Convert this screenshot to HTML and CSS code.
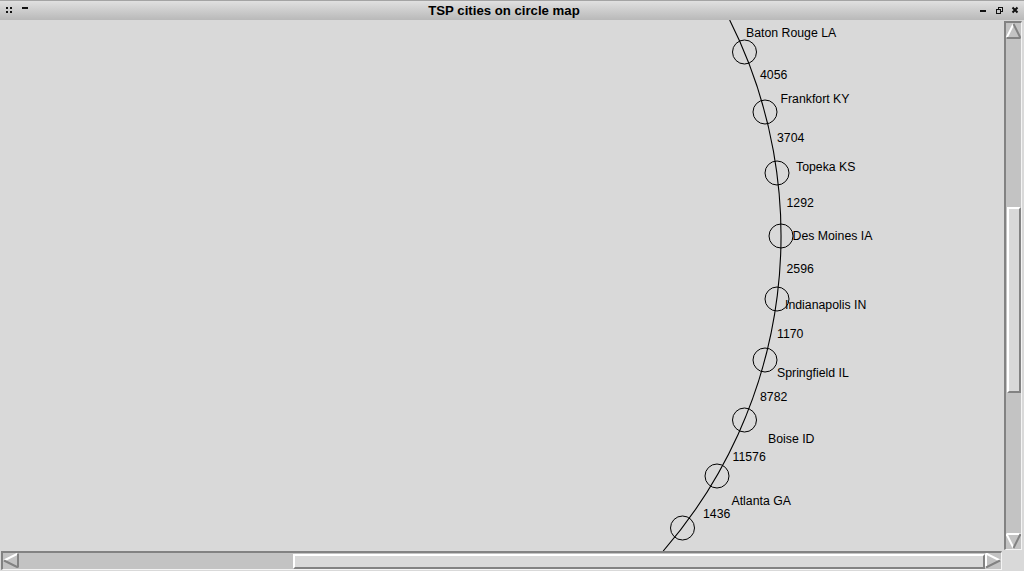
FILE: index.html
```html
<!DOCTYPE html>
<html>
<head>
<meta charset="utf-8">
<link rel="stylesheet" href="styles.css">
</head>
<body>
<div class="window">
  <div class="titlebar">
    <div class="tb-left">
      <svg class="ico" width="28" height="20" viewBox="0 0 28 20">
        <rect x="6" y="7" width="2" height="2" fill="#111"/>
        <rect x="10" y="7" width="2" height="2" fill="#111"/>
        <rect x="6" y="11" width="2" height="2" fill="#111"/>
        <rect x="10" y="11" width="2" height="2" fill="#111"/>
        <rect x="22" y="7" width="6" height="2" fill="#111"/>
      </svg>
    </div>
    <div class="title">TSP cities on circle map</div>
    <div class="tb-right">
      <svg class="ico" width="44" height="20" viewBox="0 0 44 20">
        <rect x="0" y="10" width="6" height="2" fill="#111"/>
        <rect x="18.5" y="7.5" width="4" height="4" fill="none" stroke="#111" stroke-width="1"/>
        <rect x="16.5" y="9.5" width="4" height="4" fill="#c8c8c8" stroke="#111" stroke-width="1"/>
        <path d="M32.5 7.5 L37.5 12.5 M37.5 7.5 L32.5 12.5" stroke="#111" stroke-width="2"/>
      </svg>
    </div>
  </div>
  <div class="main">
    <div class="canvas">
      <svg width="1004" height="531" viewBox="0 20 1004 531" class="map">
        <path d="M 729.65 20 A 480 480 0 0 1 663.2 551" fill="none" stroke="#000" stroke-width="1.1"/>
        <g fill="none" stroke="#000" stroke-width="1">
          <circle cx="744.5" cy="52" r="12"/>
          <circle cx="765" cy="112" r="12"/>
          <circle cx="777" cy="173" r="12"/>
          <circle cx="781" cy="236" r="12"/>
          <circle cx="777" cy="299" r="12"/>
          <circle cx="765" cy="360" r="12"/>
          <circle cx="744.5" cy="420" r="12"/>
          <circle cx="717" cy="476" r="12"/>
          <circle cx="682.5" cy="528" r="12"/>
        </g>
        <g class="labels">
          <text x="746" y="37">Baton Rouge LA</text>
          <text x="760" y="79">4056</text>
          <text x="780.5" y="102.5">Frankfort KY</text>
          <text x="777" y="142">3704</text>
          <text x="796" y="171">Topeka KS</text>
          <text x="786.5" y="207">1292</text>
          <text x="792.5" y="240">Des Moines IA</text>
          <text x="786.5" y="273">2596</text>
          <text x="785" y="309">Indianapolis IN</text>
          <text x="777" y="337.5">1170</text>
          <text x="777" y="377">Springfield IL</text>
          <text x="760" y="401">8782</text>
          <text x="768" y="443">Boise ID</text>
          <text x="732.5" y="461">11576</text>
          <text x="731.5" y="504.5">Atlanta GA</text>
          <text x="703" y="518">1436</text>
        </g>
      </svg>
    </div>
    <div class="vscroll">
      <svg class="arrow" width="15" height="16" viewBox="0 0 15 16">
        <polygon points="7.5,1 0.5,15 14.5,15" fill="#c3c3c3"/>
        <line x1="7.5" y1="1" x2="0.5" y2="15" stroke="#fff" stroke-width="2"/>
        <line x1="7.5" y1="1" x2="14.5" y2="15" stroke="#828282" stroke-width="2"/>
        <line x1="0.5" y1="15" x2="14.5" y2="15" stroke="#828282" stroke-width="2"/>
      </svg>
      <div class="vtrough">
        <div class="vthumb"></div>
      </div>
      <svg class="arrow" width="15" height="16" viewBox="0 0 15 16">
        <polygon points="0.5,1 14.5,1 7.5,15" fill="#c3c3c3"/>
        <line x1="0.5" y1="1" x2="14.5" y2="1" stroke="#fff" stroke-width="2"/>
        <line x1="0.5" y1="1" x2="7.5" y2="15" stroke="#fff" stroke-width="2"/>
        <line x1="14.5" y1="1" x2="7.5" y2="15" stroke="#828282" stroke-width="2"/>
      </svg>
    </div>
  </div>
  <div class="bottom">
    <div class="hscroll">
      <svg class="arrow" width="16" height="15" viewBox="0 0 16 15">
        <polygon points="1,7.5 15,0.5 15,14.5" fill="#c3c3c3"/>
        <line x1="1" y1="7.5" x2="15" y2="0.5" stroke="#fff" stroke-width="2"/>
        <line x1="1" y1="7.5" x2="15" y2="14.5" stroke="#828282" stroke-width="2"/>
        <line x1="15" y1="0.5" x2="15" y2="14.5" stroke="#828282" stroke-width="2"/>
      </svg>
      <div class="htrough">
        <div class="hthumb"></div>
      </div>
      <svg class="arrow" width="16" height="15" viewBox="0 0 16 15">
        <polygon points="1,0.5 15,7.5 1,14.5" fill="#c3c3c3"/>
        <line x1="1" y1="0.5" x2="1" y2="14.5" stroke="#fff" stroke-width="2"/>
        <line x1="1" y1="0.5" x2="15" y2="7.5" stroke="#fff" stroke-width="2"/>
        <line x1="1" y1="14.5" x2="15" y2="7.5" stroke="#828282" stroke-width="2"/>
      </svg>
    </div>
    <div class="corner"></div>
  </div>
</div>
</body>
</html>
```

FILE: styles.css
```css
html, body {
  margin: 0;
  padding: 0;
  background: #d9d9d9;
}
.window {
  width: 1024px;
  height: 571px;
  display: flex;
  flex-direction: column;
  background: #d9d9d9;
  overflow: hidden;
  font-family: "Liberation Sans", Arial, sans-serif;
}
.titlebar {
  height: 20px;
  box-sizing: border-box;
  border-top: 1px solid #a4a4a4;
  background: linear-gradient(#e0e0e0, #b9b9b9);
  display: flex;
  align-items: center;
}
.ico {
  display: block;
  margin-top: -1px;
}
.tb-left {
  width: 28px;
}
.tb-right {
  width: 44px;
}
.title {
  flex: 1;
  text-align: center;
  font-weight: bold;
  font-size: 13.2px;
  color: #000;
  line-height: 18px;
}
.main {
  height: 531px;
  display: flex;
}
.canvas {
  width: 1004px;
  height: 531px;
}
.map {
  display: block;
}
.labels {
  font-family: "Liberation Sans", Arial, sans-serif;
  font-size: 12.3px;
  fill: #000;
}
.vscroll {
  margin-top: 1px;
  width: 18px;
  height: 529px;
  box-sizing: border-box;
  border-left: 2px solid #828282;
  border-top: 2px solid #828282;
  border-right: 1px solid #f4f4f4;
  border-bottom: 1px solid #f4f4f4;
  background: #c3c3c3;
  display: flex;
  flex-direction: column;
}
.arrow {
  display: block;
  flex: none;
}
.vtrough {
  flex: 1;
  padding-left: 1px;
}
.vthumb {
  margin-top: 168px;
  width: 14px;
  height: 186px;
  box-sizing: border-box;
  background: #d9d9d9;
  border-left: 2px solid #fff;
  border-top: 2px solid #fff;
  border-right: 2px solid #828282;
  border-bottom: 2px solid #828282;
}
.bottom {
  height: 20px;
  display: flex;
}
.hscroll {
  margin-left: 1px;
  width: 1001px;
  height: 19px;
  box-sizing: border-box;
  border-left: 2px solid #828282;
  border-top: 2px solid #828282;
  border-right: 1px solid #f4f4f4;
  border-bottom: 1px solid #f4f4f4;
  background: #c3c3c3;
  display: flex;
}
.htrough {
  flex: 1;
  display: flex;
  padding-top: 1px;
}
.hthumb {
  margin-left: 274px;
  flex: 1;
  height: 15px;
  box-sizing: border-box;
  background: #d9d9d9;
  border-left: 2px solid #fff;
  border-top: 2px solid #fff;
  border-right: 2px solid #828282;
  border-bottom: 2px solid #828282;
}
.corner {
  flex: 1;
  background: #d9d9d9;
}
```
